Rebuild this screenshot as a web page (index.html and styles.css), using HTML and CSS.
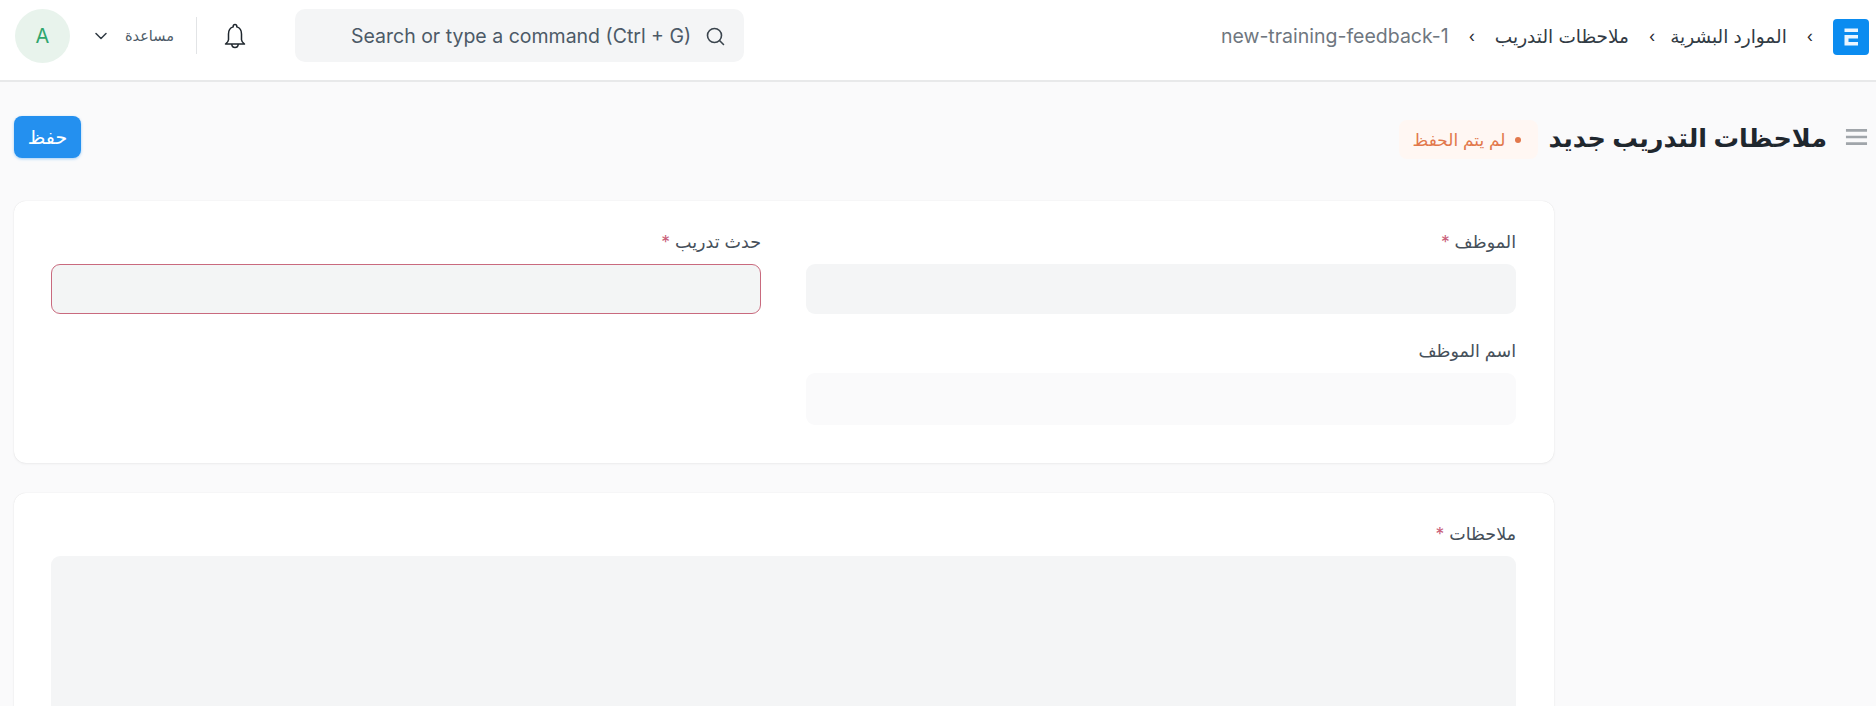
FILE: index.html
```html
<!DOCTYPE html>
<html lang="ar" dir="rtl">
<head>
<meta charset="utf-8">
<title>ملاحظات التدريب</title>
<link rel="stylesheet" href="styles.css">
</head>
<body>
<header class="navbar">
  <svg class="logo" viewBox="0 0 36 36" aria-hidden="true"><rect width="36" height="36" rx="4" fill="#0b8cf0"/><path d="M11.500 9.500h13.500v3.500H11.500zM11.500 16h13.500v3.500h-9.500v3.500h9.500v3.500H11.500z" fill="#eaf5ff"/></svg>
  <nav class="crumbs">
    <span class="sep">›</span>
    <a class="crumb">الموارد البشرية</a>
    <span class="sep">›</span>
    <a class="crumb wide">ملاحظات التدريب</a>
    <span class="sep">›</span>
    <a class="crumb current" dir="ltr">new-training-feedback-1</a>
  </nav>
  <div class="nav-tools">
    <div class="search" dir="ltr">
      <span class="search-text">Search or type a command (Ctrl + G)</span>
      <svg class="search-icon" viewBox="0 0 20 20" aria-hidden="true"><circle cx="9.500" cy="9.500" r="7"/><path d="M14.500 14.500l4 4"/></svg>
    </div>
    <svg class="bell" viewBox="0 0 24 28" aria-hidden="true"><path d="M10.200 4.300c0-1.100.7-1.800 1.800-1.800s1.800.7 1.800 1.800v.6c3 .9 4.700 3.600 4.700 7.100v5.800c0 1.300 1.500 3 3 4.200H2.500c1.500-1.200 3-2.900 3-4.200V12c0-3.500 1.700-6.200 4.700-7.100z"/><path d="M8.800 22c0 2 1.300 3.500 3.200 3.500s3.200-1.500 3.200-3.500"/></svg>
    <span class="divider"></span>
    <div class="help">
      <span>مساعدة</span>
      <svg class="chevron" viewBox="0 0 12 8" aria-hidden="true"><path d="M1 1.500l5 5 5-5"/></svg>
    </div>
    <div class="avatar">A</div>
  </div>
</header>

<main class="page">
  <div class="page-head">
    <svg class="menu" viewBox="0 0 24 18" aria-hidden="true"><path d="M1 2h22M1 9h22M1 16h22"/></svg>
    <h1 class="title">ملاحظات التدريب جديد</h1>
    <span class="pill"><i class="dot"></i>لم يتم الحفظ</span>
    <button class="save" type="button">حفظ</button>
  </div>

  <section class="card grid">
    <div class="col">
      <div class="field">
        <label class="label">الموظف <em>*</em></label>
        <div class="input"></div>
      </div>
      <div class="field">
        <label class="label">اسم الموظف</label>
        <div class="input readonly"></div>
      </div>
    </div>
    <div class="col">
      <div class="field">
        <label class="label">حدث تدريب <em>*</em></label>
        <div class="input invalid"></div>
      </div>
    </div>
  </section>

  <section class="card">
    <div class="field">
      <label class="label">ملاحظات <em>*</em></label>
      <div class="textarea"></div>
    </div>
  </section>
</main>
</body>
</html>
```
FILE: styles.css
```css
* { box-sizing: border-box; }
html, body { height: 100%; overflow: hidden; }
body {
  margin: 0;
  background: #fafafb;
  color: #1f272e;
  font-family: Inter, "DejaVu Sans", sans-serif;
}
.navbar {
  height: 82px;
  display: flex;
  align-items: center;
  padding: 0 7px 9px 15px;
  background: #fff;
  border-bottom: 2px solid #e8e9ea;
}
.logo { width: 36px; height: 36px; flex: none; margin-top: 3px; }
.crumbs {
  display: flex;
  align-items: center;
  margin-right: 20px;
  font-size: 18.500px;
  color: #313b44;
}
.sep { font-size: 16px; color: #1f272e; margin: 0 15px 0 20px; }
.sep:first-child { margin-right: 0; }
.wide { margin-left: 5px; }
.current { font-size: 19.500px; color: #6f7780; }
.nav-tools {
  margin-right: auto;
  display: flex;
  align-items: center;
}
.search {
  width: 449px;
  height: 53px;
  margin-left: 48px;
  padding: 0 19px 0 56px;
  display: flex;
  align-items: center;
  justify-content: space-between;
  background: #f4f5f6;
  border-radius: 10px;
  font-size: 19.500px;
  color: #4c5a67;
}
.search-icon { width: 20px; height: 20px; fill: none; stroke: #3a444d; stroke-width: 1.6; stroke-linecap: round; }
.bell { width: 24px; height: 28px; fill: none; stroke: #1f272e; stroke-width: 1.5; stroke-linejoin: round; }
.divider { width: 1px; height: 37px; margin: 0 26px 0 22px; background: #e2e4e6; }
.help {
  display: flex;
  align-items: center;
  gap: 18px;
  font-size: 14.500px;
  color: #4c5a67;
}
.chevron { width: 12px; height: 8px; fill: none; stroke: #313b44; stroke-width: 1.5; stroke-linecap: round; stroke-linejoin: round; }
.avatar {
  width: 55px;
  height: 54px;
  margin-right: 25px;
  display: flex;
  align-items: center;
  justify-content: center;
  border-radius: 50%;
  background: #e8f3ec;
  color: #30a66d;
  font-size: 20px;
}
.page { padding: 0 14px; }
.page-head {
  height: 119px;
  padding-bottom: 9px;
  display: flex;
  align-items: center;
}
.menu { width: 23px; height: 18px; flex: none; margin-right: -6px; fill: none; stroke: #a0a5aa; stroke-width: 2.800; }
.title {
  margin: 0 18px 0 10px;
  font-size: 25.500px;
  font-weight: 600;
  color: #1f272e;
}
.pill {
  height: 39px;
  margin-top: 5px;
  padding: 0 17px 0 14px;
  display: flex;
  align-items: center;
  gap: 10px;
  border-radius: 8px;
  background: #fff7f3;
  color: #e2784b;
  font-size: 17px;
}
.dot { width: 6px; height: 6px; border-radius: 50%; background: #e2784b; }
.save {
  margin-right: auto;
  width: 67px;
  height: 42px;
  border: 0;
  border-radius: 8px;
  background: #2490ef;
  color: #fff;
  font: 500 19px Inter, "DejaVu Sans", sans-serif;
  box-shadow: 0 1px 3px rgba(36, 144, 239, .4);
}
.card {
  width: 1540px;
  margin-right: auto;
  background: #fff;
  border-radius: 12px;
  box-shadow: 0 0 1px rgba(0, 0, 0, .12), 0 1px 3px rgba(0, 0, 0, .05);
  padding: 28px 38px 38px 37px;
}
.grid {
  height: 262px;
  display: grid;
  grid-template-columns: 1fr 1fr;
  column-gap: 45px;
  margin-bottom: 30px;
}
.col { display: flex; flex-direction: column; gap: 24px; }
.field { display: flex; flex-direction: column; gap: 9px; }
.label { font-size: 17.500px; line-height: 26px; color: #46505a; }
.label em { font-style: normal; color: #c9607a; }
.input { height: 50px; border-radius: 9px; background: #f4f5f6; }
.readonly { background: #fafafb; height: 52px; }
.invalid { background: #f3f5f5; border: 1px solid #c96a7e; }
.textarea { height: 320px; border-radius: 9px; background: #f4f5f6; }
```
